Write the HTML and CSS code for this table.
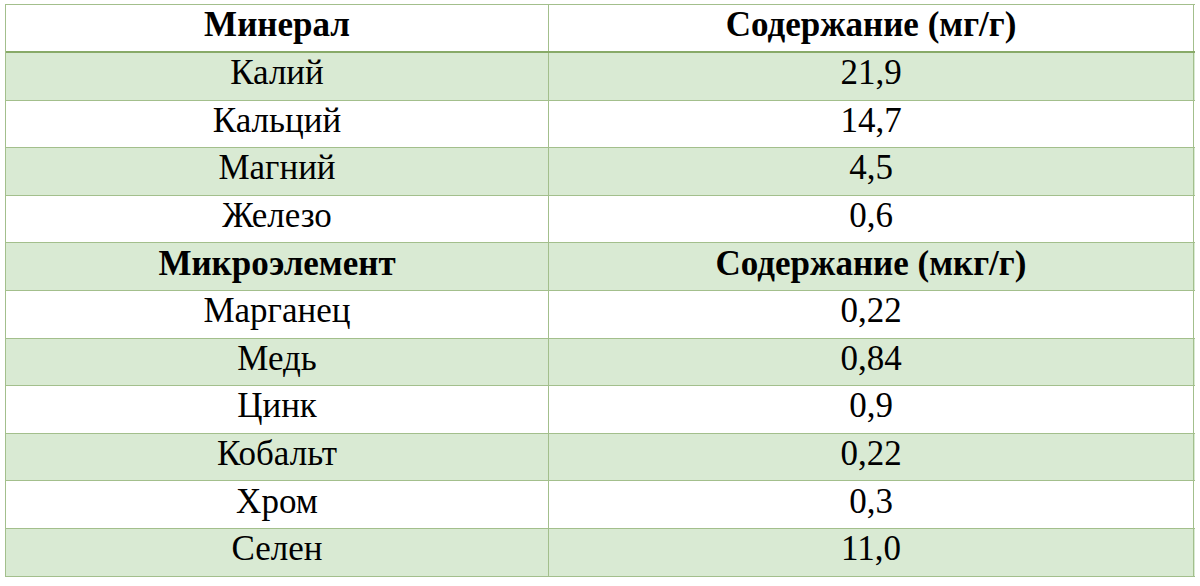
FILE: index.html
```html
<!DOCTYPE html>
<html>
<head>
<meta charset="utf-8">
<link rel="stylesheet" href="styles.css">
</head>
<body>
<div class="tbl">
  <div class="row head"><div class="cell b">Минерал</div><div class="cell b">Содержание (мг/г)</div></div>
  <div class="row g"><div class="cell">Калий</div><div class="cell">21,9</div></div>
  <div class="row"><div class="cell">Кальций</div><div class="cell">14,7</div></div>
  <div class="row g"><div class="cell">Магний</div><div class="cell">4,5</div></div>
  <div class="row"><div class="cell">Железо</div><div class="cell">0,6</div></div>
  <div class="row g"><div class="cell b">Микроэлемент</div><div class="cell b">Содержание (мкг/г)</div></div>
  <div class="row"><div class="cell">Марганец</div><div class="cell">0,22</div></div>
  <div class="row g"><div class="cell">Медь</div><div class="cell">0,84</div></div>
  <div class="row"><div class="cell">Цинк</div><div class="cell">0,9</div></div>
  <div class="row g"><div class="cell">Кобальт</div><div class="cell">0,22</div></div>
  <div class="row"><div class="cell">Хром</div><div class="cell">0,3</div></div>
  <div class="row g"><div class="cell">Селен</div><div class="cell">11,0</div></div>
</div>
</body>
</html>
```
FILE: styles.css
```css
html, body { margin: 0; background: #fff; }
body { padding: 4px 0 0 5px; }
.tbl {
  width: 1189px;
  border-top: 1px solid #a3bf8c;
  border-left: 1px solid #a3bf8c;
  font: 35px "Liberation Serif", serif;
}
.row {
  display: grid;
  grid-template-columns: 543px 645px;
  height: 47.6px;
  border-bottom: 1px solid #a3bf8c;
  box-sizing: border-box;
}
.row.head { height: 48px; border-bottom: 2px solid #88aa68; }
.cell {
  display: flex;
  align-items: center;
  justify-content: center;
  border-right: 1px solid #a3bf8c;
  padding-bottom: 6px;
  box-sizing: border-box;
}
.b { font-weight: bold; }
.g { background: #d9ead3; }
```
